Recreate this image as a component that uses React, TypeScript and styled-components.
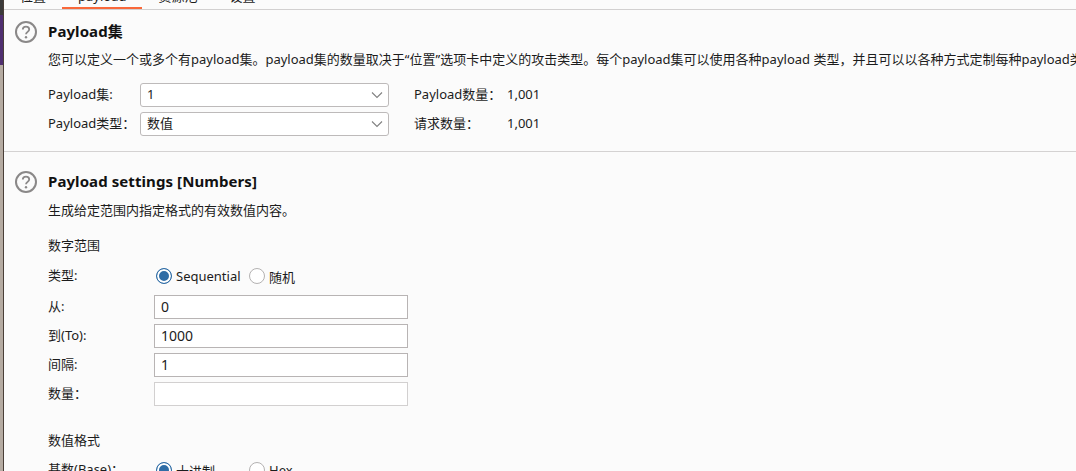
import React from "react";
import styled, { createGlobalStyle } from "styled-components";

const GlobalStyle = createGlobalStyle`
  html, body {
    margin: 0;
    padding: 0;
    background: #fbfbfb;
  }
  body {
    font-family: "Noto Sans", "Noto Sans CJK SC", sans-serif;
    font-size: 13px;
    color: #1c1c1c;
  }
`;

const Page = styled.div`
  display: flex;
  width: 1076px;
  height: 471px;
  overflow: hidden;
`;

const Edge = styled.div`
  flex: none;
  width: 4px;
  display: flex;
  flex-direction: column;
  border-right: 1px solid #4a3f38;
  box-sizing: border-box;
`;

const EdgePart = styled.div<{ $color: string; $height?: number }>`
  background: ${(p) => p.$color};
  height: ${(p) => (p.$height ? `${p.$height}px` : "auto")};
  flex: ${(p) => (p.$height ? "none" : "1")};
`;

const Main = styled.div`
  flex: 1;
  min-width: 0;
`;

const TabBar = styled.div`
  display: flex;
  height: 10px;
  box-sizing: border-box;
  border-bottom: 1px solid #d2d0d0;
  overflow: hidden;
`;

const Tab = styled.div<{ $active?: boolean }>`
  height: 9px;
  box-sizing: border-box;
  padding: 0 16px;
  display: flex;
  align-items: flex-end;
  line-height: 18px;
  border-bottom: 2px solid ${(p) => (p.$active ? "#f9683a" : "transparent")};
  & > span {
    margin-bottom: 2px;
  }
`;

const Section = styled.section<{ $top: number; $bottom?: number; $divided?: boolean }>`
  padding: ${(p) => p.$top}px 0 ${(p) => p.$bottom ?? 0}px 10px;
  ${(p) => (p.$divided ? "border-bottom: 1px solid #d4d2d2;" : "")}
`;

const Head = styled.div`
  display: flex;
  align-items: center;
  height: 24px;
`;

const HelpIcon = styled.svg`
  flex: none;
  width: 24px;
  height: 24px;
  margin-right: 10px;
`;

const Title = styled.h2`
  margin: 0 0 2px;
  font-size: 15px;
  font-weight: 700;
  letter-spacing: 0.08px;
  line-height: 22px;
  color: #111;
`;

const Body = styled.div`
  padding-left: 34px;
`;

const Description = styled.p<{ $top: number }>`
  margin: ${(p) => p.$top}px 0 0;
  line-height: 20px;
  white-space: nowrap;
`;

const SetGrid = styled.div`
  display: grid;
  grid-template-columns: 92px 249px 25px 93px auto;
  grid-auto-rows: 24px;
  row-gap: 5px;
  align-items: center;
  margin-top: 14px;
`;

const Cell = styled.span<{ $col?: number }>`
  ${(p) => (p.$col ? `grid-column: ${p.$col};` : "")}
  line-height: 18px;
  margin-bottom: 2px;
  white-space: nowrap;
`;

const SelectBox = styled.div`
  display: flex;
  align-items: center;
  justify-content: space-between;
  height: 24px;
  box-sizing: border-box;
  padding: 0 4px 0 6px;
  background: #fff;
  border: 1px solid #bdbaba;
  border-radius: 3px;
`;

const SelectValue = styled.span`
  line-height: 18px;
  margin-bottom: 2px;
`;

const Chevron = styled.svg`
  width: 14px;
  height: 14px;
`;

const GroupLabel = styled.div<{ $top: number }>`
  margin-top: ${(p) => p.$top}px;
  line-height: 20px;
`;

const FieldGrid = styled.div<{ $top: number }>`
  display: grid;
  grid-template-columns: 106px 254px;
  grid-auto-rows: 24px;
  row-gap: 5px;
  align-items: center;
  margin-top: ${(p) => p.$top}px;
`;

const RadioRow = styled.div`
  display: flex;
  align-items: center;
`;

const RadioOption = styled.label<{ $width: number }>`
  display: flex;
  align-items: center;
  width: ${(p) => p.$width}px;
  padding-left: 2px;
  box-sizing: border-box;
`;

const RadioMark = styled.span<{ $on?: boolean }>`
  flex: none;
  width: 16px;
  height: 16px;
  box-sizing: border-box;
  margin-right: 4px;
  border-radius: 50%;
  background: ${(p) => (p.$on ? "#2f6da6" : "#fff")};
  border: ${(p) => (p.$on ? "1.5px solid #2f6da6" : "1px solid #b4b2b2")};
  box-shadow: ${(p) => (p.$on ? "inset 0 0 0 2px #fff" : "none")};
`;

const TextField = styled.input`
  width: 254px;
  height: 24px;
  box-sizing: border-box;
  padding: 0 6px 2px;
  font: inherit;
  font-size: 14px;
  color: inherit;
  background: #fff;
  border: 1px solid ${(p) => (p.disabled ? "#d2d0d0" : "#b8b4b4")};
  outline: none;
`;

const Help = () => (
  <HelpIcon viewBox="0 0 24 24" fill="none">
    <circle cx="12" cy="12" r="10" stroke="#8a8888" strokeWidth="2" />
    <path
      d="M8.8 9.6c0-1.9 1.4-3 3.2-3s3.2 1.1 3.2 2.8c0 2.4-3.2 2.5-3.2 4.9"
      stroke="#8a8888"
      strokeWidth="1.8"
    />
    <circle cx="12" cy="17.2" r="1.2" fill="#8a8888" />
  </HelpIcon>
);

const Select = ({ value }: { value: string }) => (
  <SelectBox>
    <SelectValue>{value}</SelectValue>
    <Chevron viewBox="0 0 14 14" fill="none">
      <path d="M2 4.5 7 9.5l5-5" stroke="#808080" strokeWidth="1.1" />
    </Chevron>
  </SelectBox>
);

const Radio = ({ label, on, width }: { label: string; on?: boolean; width: number }) => (
  <RadioOption $width={width}>
    <RadioMark $on={on} />
    {label}
  </RadioOption>
);

const rangeFields = [
  { label: "从:", value: "0" },
  { label: "到(To):", value: "1000" },
  { label: "间隔:", value: "1" },
  { label: "数量：", value: "", disabled: true },
];

const App = () => {
  return (
    <Page>
      <GlobalStyle />
      <Edge>
        <EdgePart $color="#3b3a3a" $height={15} />
        <EdgePart $color="#4f2f70" $height={50} />
        <EdgePart $color="#b5aba2" />
      </Edge>
      <Main>
        <TabBar>
          <Tab><span>位置</span></Tab>
          <Tab $active><span>payload</span></Tab>
          <Tab><span>资源池</span></Tab>
          <Tab><span>设置</span></Tab>
        </TabBar>

        <Section $top={10} $bottom={15} $divided>
          <Head>
            <Help />
            <Title>Payload集</Title>
          </Head>
          <Body>
            <Description $top={5}>
              您可以定义一个或多个有payload集。payload集的数量取决于“位置”选项卡中定义的攻击类型。每个payload集可以使用各种payload 类型，并且可以以各种方式定制每种payload类型。
            </Description>
            <SetGrid>
              <Cell>Payload集:</Cell>
              <Select value="1" />
              <Cell $col={4}>Payload数量：</Cell>
              <Cell>1,001</Cell>
              <Cell>Payload类型：</Cell>
              <Select value="数值" />
              <Cell $col={4}>请求数量：</Cell>
              <Cell>1,001</Cell>
            </SetGrid>
          </Body>
        </Section>

        <Section $top={18}>
          <Head>
            <Help />
            <Title>Payload settings [Numbers]</Title>
          </Head>
          <Body>
            <Description $top={6}>生成给定范围内指定格式的有效数值内容。</Description>
            <GroupLabel $top={15}>数字范围</GroupLabel>
            <FieldGrid $top={9}>
              <Cell>类型:</Cell>
              <RadioRow>
                <Radio label="Sequential" on width={93} />
                <Radio label="随机" width={60} />
              </RadioRow>
            </FieldGrid>
            <FieldGrid $top={7}>
              {rangeFields.map((field) => (
                <React.Fragment key={field.label}>
                  <Cell>{field.label}</Cell>
                  <TextField value={field.value} disabled={field.disabled} readOnly />
                </React.Fragment>
              ))}
            </FieldGrid>
            <GroupLabel $top={24}>数值格式</GroupLabel>
            <FieldGrid $top={8}>
              <Cell>基数(Base)：</Cell>
              <RadioRow>
                <Radio label="十进制" on width={93} />
                <Radio label="Hex" width={60} />
              </RadioRow>
            </FieldGrid>
          </Body>
        </Section>
      </Main>
    </Page>
  );
};

export default App;
